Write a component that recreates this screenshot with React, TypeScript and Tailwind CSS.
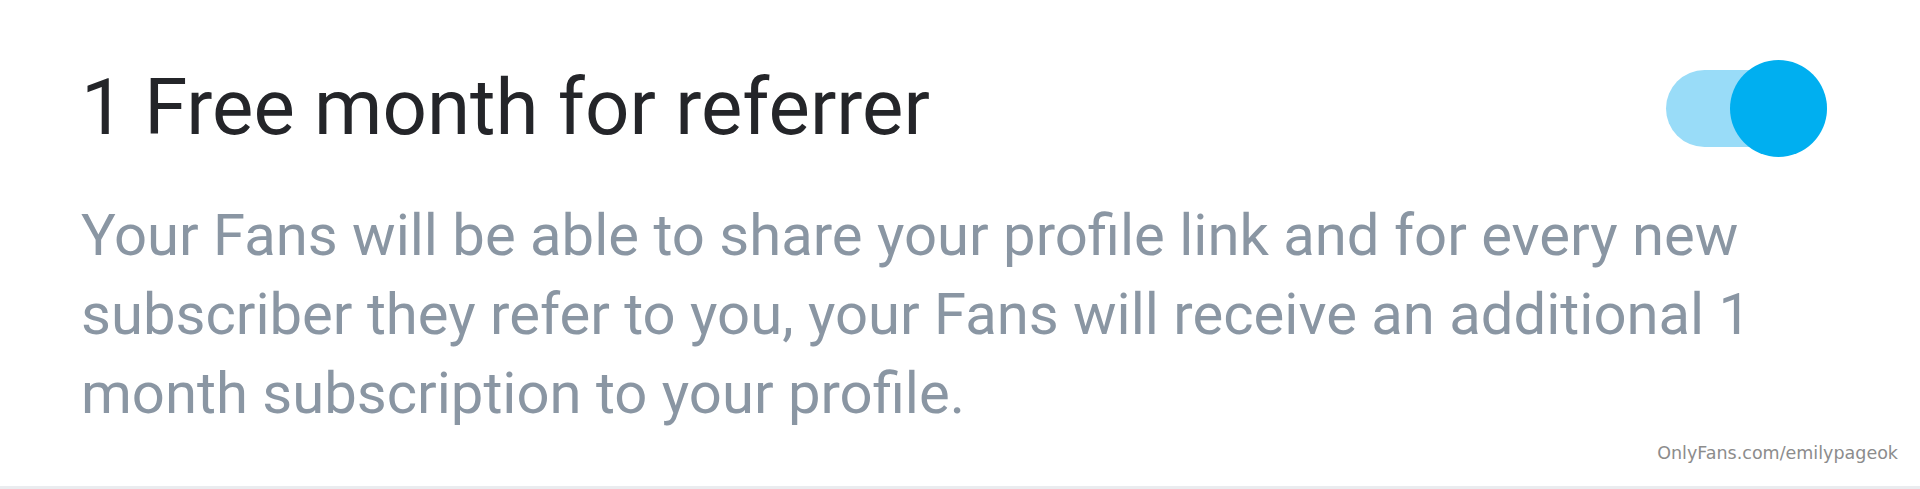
import React from "react";

export default function App() {
    return (
        <div
            className="relative h-[489px] w-full overflow-hidden bg-white border-b-[3px] border-[#eaecef]"
            style={{ fontFamily: "Roboto, 'Noto Sans', sans-serif" }}
        >
            <div className="flex flex-col pl-[81px] pr-[93px] pt-[50px]">
                {/* Title row */}
                <div className="flex items-center justify-between">
                    <h2 className="text-[78px] leading-[116px] font-normal text-[#242529]">
                        1 Free month for referrer
                    </h2>

                    {/* Toggle (on) */}
                    <div className="flex items-center h-[97px] w-[161px]">
                        <div className="flex items-center h-[77px] w-[161px] rounded-full bg-[#99dcf8] justify-end">
                            <div className="h-[97px] w-[97px] rounded-full bg-[#00aff0]" />
                        </div>
                    </div>
                </div>

                <p className="mt-[30px] w-[1740px] text-[58px] leading-[79px] text-[#8a96a3]">
                    Your Fans will be able to share your profile link and for every new subscriber they
                    refer to you, your Fans will receive an additional 1 month subscription to your profile.
                </p>
            </div>

            {/* Watermark */}
            <span
                className="absolute right-[22px] bottom-[24px] text-[17.5px] leading-none text-[#8c8c8c]"
                style={{ fontFamily: "'DejaVu Sans', sans-serif" }}
            >
                OnlyFans.com/emilypageok
            </span>
        </div>
    );
}
